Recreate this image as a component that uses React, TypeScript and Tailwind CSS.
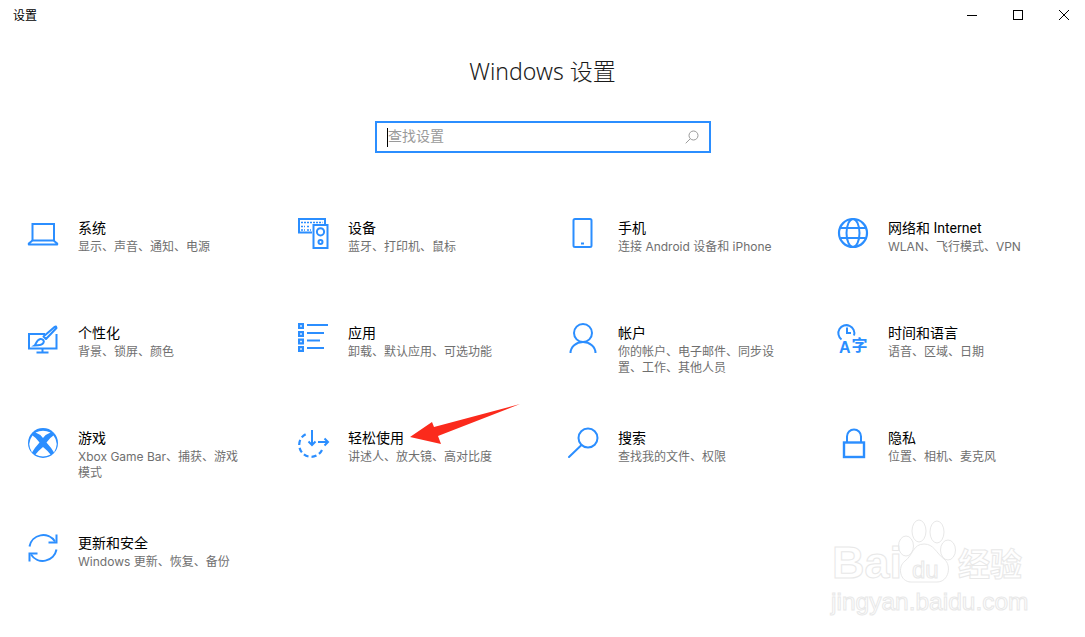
import type { ReactNode } from "react";

function Icon({ children }: { children: ReactNode }) {
  return (
    <svg
      viewBox="0 0 36 36"
      width={36}
      height={36}
      fill="none"
      stroke="#2b8eff"
      strokeWidth={2}
      className="shrink-0"
    >
      {children}
    </svg>
  );
}

const items: { title: string; desc: string; icon: ReactNode }[] = [
  {
    title: "系统",
    desc: "显示、声音、通知、电源",
    icon: (
      <>
        <path d="M6.5 25V8h21.500v17" />
        <path d="M6.500 24.500 2.800 27.500v1h28.400v-1l-3.700-3z" strokeLinejoin="round" />
      </>
    ),
  },
  {
    title: "设备",
    desc: "蓝牙、打印机、鼠标",
    icon: (
      <>
        <path d="M16 16.500H3V3h26v5" />
        <rect x="17.500" y="9" width="14" height="23" />
        <circle cx="24.500" cy="15.800" r="3.600" />
        <circle cx="24.500" cy="26" r="2" />
        <path d="M5 6.500h21.500M5 10.500h4M11 10.500h2M5 14h4M11 14h4" strokeWidth={1.600} strokeDasharray="2 1" />
      </>
    ),
  },
  {
    title: "手机",
    desc: "连接 Android 设备和 iPhone",
    icon: (
      <>
        <rect x="7.500" y="3" width="18" height="28" rx="1.500" />
        <path d="M15 27.500h3" />
      </>
    ),
  },
  {
    title: "网络和 Internet",
    desc: "WLAN、飞行模式、VPN",
    icon: (
      <>
        <circle cx="17" cy="17" r="14" strokeWidth={2.200} />
        <ellipse cx="17" cy="17" rx="6.500" ry="14" />
        <path d="M4.500 12h25M4.500 22h25" />
      </>
    ),
  },
  {
    title: "个性化",
    desc: "背景、锁屏、颜色",
    icon: (
      <>
        <path d="M19 13H3v14.500h27.500V13" />
        <path d="M16.500 27.500v3.500M10.500 31.500h12" />
        <path d="M28.500 6 17.500 15.500l2.500 2.500 10.500-11-.5-1.500z" fill="#fff" strokeLinejoin="round" />
        <path d="M8.500 24.500c1.500-1 2-6 6-6.500 2.500-.2 4 2 3 3.800-1.200 2.200-5 2.700-9 2.700z" fill="#fff" />
      </>
    ),
  },
  {
    title: "应用",
    desc: "卸载、默认应用、可选功能",
    icon: (
      <>
        <path d="M2 2h6v6H2zM2 10h6v6H2zM2 17.500h6v6H2zM2 25h6v6H2z" fill="#2b8eff" stroke="none" />
        <path d="M4.200 4.200h1.600v1.600H4.200zM4.200 12.200h1.600v1.600H4.200zM4.200 19.700h1.600v1.600H4.200zM4.200 27.200h1.600v1.600H4.200z" fill="#fff" stroke="none" />
        <path d="M11 4h21M11 12h17M11 19.500h13M11 27h17" />
      </>
    ),
  },
  {
    title: "帐户",
    desc: "你的帐户、电子邮件、同步设置、工作、其他人员",
    icon: (
      <>
        <circle cx="17" cy="12" r="9" />
        <path d="M4.500 32a12.500 11 0 0 1 25 0" />
      </>
    ),
  },
  {
    title: "时间和语言",
    desc: "语音、区域、日期",
    icon: (
      <>
        <path d="M5.500 18.500A8 8 0 1 1 18 14.500" />
        <path d="M11 6.500v5.500h4" />
        <text x="3" y="32" fontSize="16" fontWeight="700" fill="#2b8eff" stroke="none" fontFamily="'Liberation Sans', sans-serif">
          A
        </text>
        <text x="15.500" y="30" fontSize="16" fontWeight="700" fill="#2b8eff" stroke="none" fontFamily="'Noto Sans CJK SC', sans-serif">
          字
        </text>
      </>
    ),
  },
  {
    title: "游戏",
    desc: "Xbox Game Bar、捕获、游戏模式",
    icon: (
      <>
        <circle cx="17" cy="17" r="15" fill="#2b8eff" stroke="none" />
        <path
          d="M9.500 6.500Q17 3 24.500 6.500 20 8 17 12 14 8 9.500 6.500zM6.500 9.500Q10 11.500 13.500 16.500 8.500 22 6 26.500 .5 17 6.500 9.500zM27.500 9.500Q24 11.500 20.500 16.500 25.500 22 28 26.500 33.500 17 27.500 9.500zM17 21Q12 25 9.500 28.500 17 32.500 24.500 28.500 22 25 17 21z"
          fill="#fff"
          stroke="none"
        />
      </>
    ),
  },
  {
    title: "轻松使用",
    desc: "讲述人、放大镜、高对比度",
    icon: (
      <>
        <path d="M26 24A12 12 0 1 1 10 8" strokeDasharray="5 3" strokeWidth={2.200} />
        <path d="M16 4v15" />
        <path d="M12.500 15.500 16 19l3.500-3.500" />
        <path d="M22 16h10M28.500 12.500 32 16l-3.500 3.500" />
      </>
    ),
  },
  {
    title: "搜索",
    desc: "查找我的文件、权限",
    icon: (
      <>
        <circle cx="22" cy="12" r="9.500" />
        <path d="M15.500 19 3 31" strokeLinecap="round" />
      </>
    ),
  },
  {
    title: "隐私",
    desc: "位置、相机、麦克风",
    icon: (
      <>
        <rect x="8" y="16.500" width="20" height="14.500" strokeWidth={2.400} />
        <path d="M11 16v-5.500a7 7 0 0 1 14 0V16" />
      </>
    ),
  },
  {
    title: "更新和安全",
    desc: "Windows 更新、恢复、备份",
    icon: (
      <>
        <path d="M3.500 15.500A14 14 0 0 1 29 10.500" />
        <path d="M30.500 3.500v8h-8" />
        <path d="M30.500 18.500A14 14 0 0 1 5 23.500" />
        <path d="M3.500 30.500v-8h8" />
      </>
    ),
  },
];

export default function App() {
  return (
    <div className="relative h-[637px] w-[1085px] overflow-hidden bg-white font-['Noto_Sans','Noto_Sans_CJK_SC',sans-serif] text-black">
      <div className="flex h-[30px] items-center justify-between pl-[13px]">
        <span className="mt-px text-xs">设置</span>
        <div className="-mr-[2px] flex">
          <div className="flex h-[30px] w-[46px] items-center justify-center">
            <div className="h-px w-[10px] bg-black" />
          </div>
          <div className="flex h-[30px] w-[46px] items-center justify-center">
            <div className="h-[10px] w-[10px] border border-black" />
          </div>
          <div className="flex h-[30px] w-[46px] items-center justify-center">
            <svg viewBox="0 0 10 10" width={10} height={10} stroke="#000" strokeWidth={1}>
              <path d="M0 0l10 10M10 0 0 10" />
            </svg>
          </div>
        </div>
      </div>

      <h1 className="mt-[23px] text-center text-[23px] leading-[36px] font-light text-[#1a1a1a]">Windows 设置</h1>

      <div className="mt-[32px] ml-[375px] flex h-[32px] w-[336px] items-center justify-between border-2 border-[#2b8eff] px-[10px]">
        <div className="flex items-center">
          <div className="h-[19px] w-px bg-black" />
          <span className="-mt-[2px] text-sm text-[#9a9a9a]">查找设置</span>
        </div>
        <svg viewBox="0 0 14 14" width={14} height={14} fill="none" stroke="#9a9a9a" strokeWidth={1}>
          <circle cx="8.500" cy="5.500" r="4.500" />
          <path d="M5.200 8.800.7 13.300" />
        </svg>
      </div>

      <div className="mt-[63px] grid grid-cols-[270px_270px_270px_270px] auto-rows-[105px] pl-[26px]">
        {items.map((item) => (
          <div key={item.title} className="flex gap-4">
            <Icon>{item.icon}</Icon>
            <div className="w-[168px] pt-[2px]">
              <div className="font-['Roboto','Noto_Sans_CJK_SC',sans-serif] text-sm leading-[21px]">{item.title}</div>
              <div className="font-['Inter','Noto_Sans_CJK_SC',sans-serif] text-xs leading-[16px] text-[#6f6f6f]">{item.desc}</div>
            </div>
          </div>
        ))}
      </div>

      {/* red arrow drawn over the page */}
      <svg className="absolute top-[400px] left-[405px]" width={120} height={50} viewBox="0 0 120 50">
        <path d="M5 37 27 22 29 27 115 4 33 36 36 44z" fill="#fb2a1c" />
      </svg>

      {/* baidu watermark */}
      <div className="absolute top-[515px] left-[830px] h-[110px] w-[210px]">
        <svg className="absolute top-0 left-[64px]" width={80} height={76} viewBox="0 0 80 76" fill="#fff" stroke="#e8e8e8" strokeWidth={1}>
          <ellipse cx="12" cy="31" rx="7.500" ry="10" />
          <ellipse cx="25" cy="16" rx="7" ry="11" />
          <ellipse cx="43" cy="17" rx="7" ry="11" />
          <ellipse cx="54" cy="35" rx="7.500" ry="10" />
          <path d="M30 29c10 0 12 9 20 15 8 6 5 23-7 23H17C6 67 3 52 11 46c8-6 8-17 19-17z" />
        </svg>
        <span className="absolute top-[23px] left-[2px] font-['Liberation_Sans',sans-serif] text-[45px] leading-[50px] font-bold text-transparent [-webkit-text-stroke:1px_#e8e8e8]">
          Bai
        </span>
        <span className="absolute top-[40px] left-[82px] font-['Liberation_Sans',sans-serif] text-[24px] leading-[30px] text-transparent [-webkit-text-stroke:1px_#e8e8e8]">
          du
        </span>
        <span className="absolute top-[29px] left-[128px] text-[32px] leading-[40px] font-bold text-transparent [-webkit-text-stroke:1px_#e8e8e8]">
          经验
        </span>
        <span className="absolute top-[72px] left-[1px] font-['Liberation_Sans',sans-serif] text-[24.500px] leading-[30px] text-transparent [-webkit-text-stroke:1px_#e8e8e8]">
          jingyan.baidu.com
        </span>
      </div>
    </div>
  );
}
